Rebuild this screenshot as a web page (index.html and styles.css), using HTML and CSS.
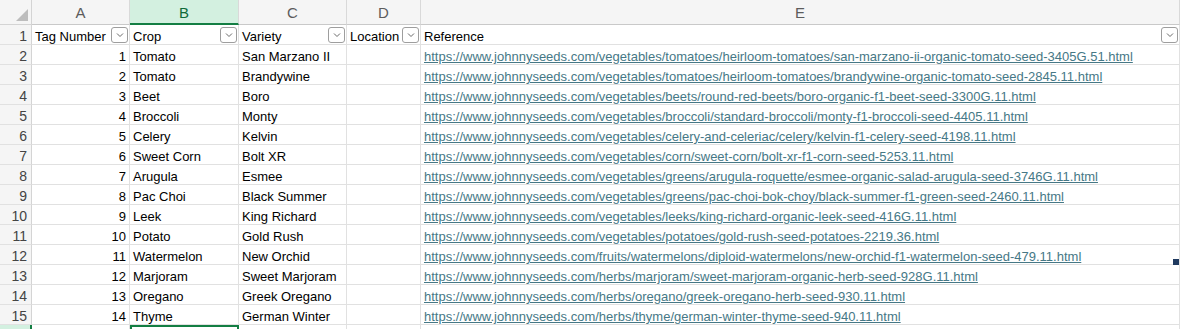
FILE: index.html
```html
<!DOCTYPE html>
<html lang="en">
<head>
  <meta charset="UTF-8">
  <meta name="viewport" content="width=device-width, initial-scale=1.0">
  <title>Seeds</title>
  <link rel="stylesheet" href="styles.css">
</head>
<body>
  <div class="sheet">
    <!-- column headers -->
    <div class="corner"><span class="tri"></span></div>
    <div class="colhdr">A</div>
    <div class="colhdr sel">B</div>
    <div class="colhdr">C</div>
    <div class="colhdr">D</div>
    <div class="colhdr">E</div>

    <!-- table header row -->
    <div class="rowhdr">1</div>
    <div class="cell head">Tag Number<span class="filter"><svg width="8" height="6" viewBox="0 0 8 6"><path d="M1 1.5l3 3 3-3" fill="none" stroke="#6a6a6a" stroke-width="1"/></svg></span></div>
    <div class="cell head">Crop<span class="filter"><svg width="8" height="6" viewBox="0 0 8 6"><path d="M1 1.5l3 3 3-3" fill="none" stroke="#6a6a6a" stroke-width="1"/></svg></span></div>
    <div class="cell head">Variety<span class="filter"><svg width="8" height="6" viewBox="0 0 8 6"><path d="M1 1.5l3 3 3-3" fill="none" stroke="#6a6a6a" stroke-width="1"/></svg></span></div>
    <div class="cell head">Location<span class="filter"><svg width="8" height="6" viewBox="0 0 8 6"><path d="M1 1.5l3 3 3-3" fill="none" stroke="#6a6a6a" stroke-width="1"/></svg></span></div>
    <div class="cell head">Reference<span class="filter"><svg width="8" height="6" viewBox="0 0 8 6"><path d="M1 1.5l3 3 3-3" fill="none" stroke="#6a6a6a" stroke-width="1"/></svg></span></div>

    <div class="rowhdr">2</div><div class="cell num">1</div><div class="cell">Tomato</div><div class="cell">San Marzano II</div><div class="cell"></div>
    <div class="cell"><a class="link">https://www.johnnyseeds.com/vegetables/tomatoes/heirloom-tomatoes/san-marzano-ii-organic-tomato-seed-3405G.51.html</a></div>

    <div class="rowhdr">3</div><div class="cell num">2</div><div class="cell">Tomato</div><div class="cell">Brandywine</div><div class="cell"></div>
    <div class="cell"><a class="link">https://www.johnnyseeds.com/vegetables/tomatoes/heirloom-tomatoes/brandywine-organic-tomato-seed-2845.11.html</a></div>

    <div class="rowhdr">4</div><div class="cell num">3</div><div class="cell">Beet</div><div class="cell">Boro</div><div class="cell"></div>
    <div class="cell"><a class="link">https://www.johnnyseeds.com/vegetables/beets/round-red-beets/boro-organic-f1-beet-seed-3300G.11.html</a></div>

    <div class="rowhdr">5</div><div class="cell num">4</div><div class="cell">Broccoli</div><div class="cell">Monty</div><div class="cell"></div>
    <div class="cell"><a class="link">https://www.johnnyseeds.com/vegetables/broccoli/standard-broccoli/monty-f1-broccoli-seed-4405.11.html</a></div>

    <div class="rowhdr">6</div><div class="cell num">5</div><div class="cell">Celery</div><div class="cell">Kelvin</div><div class="cell"></div>
    <div class="cell"><a class="link">https://www.johnnyseeds.com/vegetables/celery-and-celeriac/celery/kelvin-f1-celery-seed-4198.11.html</a></div>

    <div class="rowhdr">7</div><div class="cell num">6</div><div class="cell">Sweet Corn</div><div class="cell">Bolt XR</div><div class="cell"></div>
    <div class="cell"><a class="link">https://www.johnnyseeds.com/vegetables/corn/sweet-corn/bolt-xr-f1-corn-seed-5253.11.html</a></div>

    <div class="rowhdr">8</div><div class="cell num">7</div><div class="cell">Arugula</div><div class="cell">Esmee</div><div class="cell"></div>
    <div class="cell"><a class="link">https://www.johnnyseeds.com/vegetables/greens/arugula-roquette/esmee-organic-salad-arugula-seed-3746G.11.html</a></div>

    <div class="rowhdr">9</div><div class="cell num">8</div><div class="cell">Pac Choi</div><div class="cell">Black Summer</div><div class="cell"></div>
    <div class="cell"><a class="link">https://www.johnnyseeds.com/vegetables/greens/pac-choi-bok-choy/black-summer-f1-green-seed-2460.11.html</a></div>

    <div class="rowhdr">10</div><div class="cell num">9</div><div class="cell">Leek</div><div class="cell">King Richard</div><div class="cell"></div>
    <div class="cell"><a class="link">https://www.johnnyseeds.com/vegetables/leeks/king-richard-organic-leek-seed-416G.11.html</a></div>

    <div class="rowhdr">11</div><div class="cell num">10</div><div class="cell">Potato</div><div class="cell">Gold Rush</div><div class="cell"></div>
    <div class="cell"><a class="link">https://www.johnnyseeds.com/vegetables/potatoes/gold-rush-seed-potatoes-2219.36.html</a></div>

    <div class="rowhdr">12</div><div class="cell num">11</div><div class="cell">Watermelon</div><div class="cell">New Orchid</div><div class="cell"></div>
    <div class="cell edge"><a class="link">https://www.johnnyseeds.com/fruits/watermelons/diploid-watermelons/new-orchid-f1-watermelon-seed-479.11.html</a><span class="handle"></span></div>

    <div class="rowhdr">13</div><div class="cell num">12</div><div class="cell">Marjoram</div><div class="cell">Sweet Marjoram</div><div class="cell"></div>
    <div class="cell"><a class="link">https://www.johnnyseeds.com/herbs/marjoram/sweet-marjoram-organic-herb-seed-928G.11.html</a></div>

    <div class="rowhdr">14</div><div class="cell num">13</div><div class="cell">Oregano</div><div class="cell">Greek Oregano</div><div class="cell"></div>
    <div class="cell"><a class="link">https://www.johnnyseeds.com/herbs/oregano/greek-oregano-herb-seed-930.11.html</a></div>

    <div class="rowhdr">15</div><div class="cell num">14</div><div class="cell">Thyme</div><div class="cell">German Winter</div><div class="cell"></div>
    <div class="cell"><a class="link">https://www.johnnyseeds.com/herbs/thyme/german-winter-thyme-seed-940.11.html</a></div>

    <div class="rowhdr sel"></div><div class="cell"></div><div class="cell active"></div><div class="cell"></div><div class="cell"></div><div class="cell"></div>
  </div>
</body>
</html>
```
FILE: styles.css
```css
body {
  margin: 0;
  background: #fff;
  overflow: hidden;
  font-family: "Liberation Sans", Arial, sans-serif;
  font-size: 13px;
  color: #000;
}

.sheet {
  display: grid;
  grid-template-columns: 32px 98px 109px 108px 74px 759px;
  grid-template-rows: 25px;
  grid-auto-rows: 20px;
  width: 1180px;
}

.corner,
.colhdr,
.rowhdr,
.cell {
  box-sizing: border-box;
  border-right: 1px solid #e1e1e1;
  border-bottom: 1px solid #e1e1e1;
}

.corner {
  background: #f5f5f5;
  border-color: #d4d4d4;
  display: flex;
  align-items: flex-end;
  justify-content: flex-end;
  padding: 0 3px 3px 0;
}

.tri {
  width: 0;
  height: 0;
  border-left: 12px solid transparent;
  border-bottom: 12px solid #bdbdbd;
}

.colhdr {
  background: #f5f5f5;
  border-right-color: #d9d9d9;
  border-bottom-color: #c9c9c9;
  color: #5c5c5c;
  font-size: 15px;
  text-align: center;
  line-height: 24px;
  padding-top: 1px;
}

.colhdr.sel {
  background: #d3f0e0;
  color: #0e6b3a;
  border-bottom: 2px solid #137e43;
  line-height: 23px;
}

.rowhdr {
  background: #f5f5f5;
  border-right-color: #d4d4d4;
  border-bottom-color: #e1e1e1;
  color: #444;
  font-size: 14px;
  text-align: right;
  padding: 3px 4px 0 0;
  line-height: 17px;
}

.rowhdr.sel {
  background: #d3f0e0;
  border-right: 2px solid #137e43;
}

.cell {
  padding: 3px 3px 0 3px;
  line-height: 17px;
  white-space: nowrap;
  overflow: hidden;
  position: relative;
}

.cell.edge {
  overflow: visible;
  z-index: 1;
}

.cell.num {
  text-align: right;
}

.cell.head {
  display: flex;
  justify-content: space-between;
  overflow: visible;
  padding-right: 1px;
}

.filter {
  box-sizing: border-box;
  width: 17px;
  height: 16px;
  margin-top: -1px;
  border: 1px solid #9e9e9e;
  border-radius: 3px;
  background: #fff;
  display: flex;
  align-items: center;
  justify-content: center;
  flex-shrink: 0;
}

.link {
  color: #467886;
  text-decoration: underline;
}

.handle {
  position: absolute;
  right: 0;
  bottom: -1px;
  width: 6px;
  height: 6px;
  background: #1f3a5f;
}

.cell.active {
  border: 2px solid #137e43;
  border-bottom: none;
}
```
